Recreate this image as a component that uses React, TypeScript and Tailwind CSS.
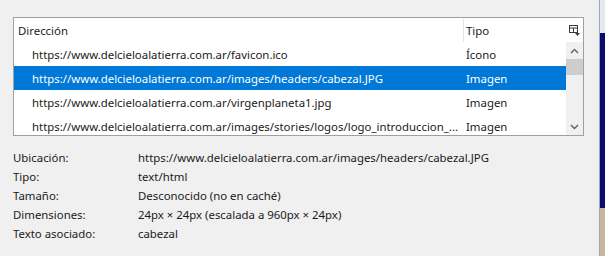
import React from 'react';

const rows = [
  { url: 'https://www.delcieloalatierra.com.ar/favicon.ico', tipo: 'Ícono' },
  { url: 'https://www.delcieloalatierra.com.ar/images/headers/cabezal.JPG', tipo: 'Imagen', selected: true },
  { url: 'https://www.delcieloalatierra.com.ar/virgenplaneta1.jpg', tipo: 'Imagen' },
  { url: 'https://www.delcieloalatierra.com.ar/images/stories/logos/logo_introduccion_...', tipo: 'Imagen' },
];

const details = [
  ['Ubicación:', 'https://www.delcieloalatierra.com.ar/images/headers/cabezal.JPG'],
  ['Tipo:', 'text/html'],
  ['Tamaño:', 'Desconocido (no en caché)'],
  ['Dimensiones:', '24px × 24px (escalada a 960px × 24px)'],
  ['Texto asociado:', 'cabezal'],
];

const ColumnPicker = () => (
  <svg width="11" height="11" viewBox="0 0 11 11" fill="none">
    <rect x="0.5" y="0.5" width="8" height="7" stroke="#3c3c3c" />
    <line x1="0.5" y1="3" x2="8.5" y2="3" stroke="#3c3c3c" />
    <line x1="4.5" y1="3" x2="4.5" y2="7.5" stroke="#3c3c3c" />
    <path d="M6 8h5l-2.5 3z" fill="#3c3c3c" />
  </svg>
);

const Chevron = ({ up }: { up?: boolean }) => (
  <svg width="9" height="6" viewBox="0 0 9 6" fill="none">
    <path d={up ? 'M1 5l3.5-3.5L8 5' : 'M1 1l3.5 3.5L8 1'} stroke="#606060" strokeWidth="1.4" />
  </svg>
);

export default function App() {
  return (
    <div className="w-[605px] h-[256px] bg-[#f0f0f0] flex overflow-hidden font-['Noto_Sans',sans-serif] text-[11.4px] text-[#1a1a1a]">
      <div className="w-[599px] pl-[13px] pt-[17px]">
        <div className="w-[571px] h-[119px] border border-[#a0a0a0] bg-white flex flex-col overflow-hidden">
          <div className="h-[24px] flex shrink-0 pt-[1px]">
            <div className="w-[449px] shrink-0 pl-[4px] flex items-center">Dirección</div>
            <div className="w-[103px] shrink-0 border-l border-[#e5e5e5] pl-[2px] flex items-center">Tipo</div>
            <div className="w-[17px] shrink-0 flex items-center justify-center">
              <ColumnPicker />
            </div>
          </div>
          <div className="flex flex-1 min-h-0">
            <div className="w-[552px] flex flex-col">
              {rows.map((r) => (
                <div
                  key={r.url}
                  className={
                    'h-[24px] shrink-0 flex items-center whitespace-nowrap pt-[1px] ' +
                    (r.selected ? 'bg-[#0078d7] text-white' : '')
                  }
                >
                  <div className="w-[450px] shrink-0 pl-[18px] overflow-hidden">{r.url}</div>
                  <div className="pl-[2px]">{r.tipo}</div>
                </div>
              ))}
            </div>
            <div className="w-[17px] bg-[#f0f0f0] flex flex-col items-center">
              <div className="h-[17px] flex items-center justify-center">
                <Chevron up />
              </div>
              <div className="w-[17px] h-[16px] bg-[#cdcdcd]" />
              <div className="flex-1" />
              <div className="h-[17px] flex items-center justify-center">
                <Chevron />
              </div>
            </div>
          </div>
        </div>
        <div className="mt-[12px] flex flex-col">
          {details.map(([k, v]) => (
            <div key={k} className="h-[19px] flex items-center pt-[1px]">
              <div className="w-[125px]">{k}</div>
              <div>{v}</div>
            </div>
          ))}
        </div>
      </div>
      <div className="w-[6px] border-l border-[#9aa6b8] flex flex-col">
        <div className="h-[33px] bg-[#e6eaf0]" />
        <div className="h-[175px] bg-[#0b0b6e]" />
        <div className="flex-1 bg-[#c9b79a]" />
      </div>
    </div>
  );
}
